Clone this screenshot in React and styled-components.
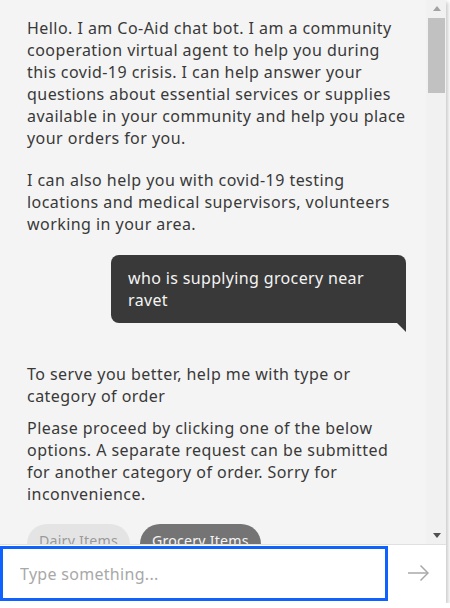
import React from "react";
import styled, { createGlobalStyle } from "styled-components";

const Global = createGlobalStyle`
  html, body { margin: 0; padding: 0; background: #ffffff; }
  body { font-family: "Noto Sans", "Open Sans", sans-serif; }
  * { box-sizing: border-box; }
`;

const Widget = styled.div`
  width: 446px;
  height: 603px;
  display: flex;
  flex-direction: column;
  background: #f4f4f4;
  box-shadow: 2px 2px 4px rgba(0, 0, 0, 0.22);
`;

const ChatArea = styled.div`
  height: 544px;
  display: flex;
  flex-direction: row;
`;

const Messages = styled.div`
  flex: 1;
  overflow: hidden;
  padding: 17px 20px 0 27px;
  display: flex;
  flex-direction: column;
`;

const BotText = styled.p`
  margin: 0 0 ${(p) => p.$gap}px 0;
  font-size: 16px;
  line-height: 22px;
  letter-spacing: 0.45px;
  color: #393939;
`;

const Line = styled.span`
  display: block;
  white-space: nowrap;
`;

const Bubble = styled.div`
  position: relative;
  align-self: flex-end;
  width: 295px;
  margin-bottom: 40px;
  padding: 12px 16px 12px 17px;
  background: #393939;
  color: #f4f4f4;
  font-size: 16px;
  line-height: 22px;
  letter-spacing: 0.35px;
  border-radius: 8px 8px 0 8px;
`;

const Tail = styled.span`
  position: absolute;
  right: 0;
  bottom: -9px;
  width: 0;
  height: 0;
  border-top: 9px solid #393939;
  border-left: 9px solid transparent;
`;

const Chips = styled.div`
  display: flex;
  gap: 10px;
`;

const Chip = styled.button`
  flex: none;
  height: 40px;
  padding: 6px 12px 12px 12px;
  border: none;
  border-radius: 20px;
  font-family: inherit;
  font-size: 14.2px;
  line-height: 22px;
  letter-spacing: 0.2px;
  background: ${(p) => (p.$active ? "#747474" : "#e4e4e4")};
  color: ${(p) => (p.$active ? "#f4f4f4" : "#9a9a9a")};
  display: flex;
  align-items: flex-start;
`;

const Scrollbar = styled.div`
  width: 20px;
  background: #f1f1f1;
  display: flex;
  flex-direction: column;
  align-items: stretch;
`;

const ArrowBtn = styled.div`
  height: 17px;
  display: flex;
  align-items: center;
  justify-content: center;
  padding-left: 1px;
`;

const Triangle = styled.span`
  width: 0;
  height: 0;
  border-left: 4.5px solid transparent;
  border-right: 4.5px solid transparent;
  ${(p) =>
    p.$down
      ? `border-top: 5px solid #505050;`
      : `border-bottom: 5px solid #a3a3a3;`}
`;

const Track = styled.div`
  flex: 1;
  padding: 1px 1px 0 2px;
`;

const Thumb = styled.div`
  height: 75px;
  background: #c1c1c1;
`;

const Composer = styled.div`
  height: 59px;
  background: #ffffff;
  border-top: 1px solid #e0e0e0;
  padding: 1px 0 2px 0;
  display: flex;
  flex-direction: row;
`;

const Input = styled.input`
  width: 388px;
  height: 55px;
  border: 3px solid #0f62fe;
  outline: none;
  padding: 0 0 0 17px;
  font-family: inherit;
  font-size: 16px;
  letter-spacing: 0.3px;
  color: #161616;
  background: #ffffff;
  caret-color: #161616;
  &::placeholder {
    color: #a8a8a8;
  }
`;

const Send = styled.button`
  flex: 1;
  border: none;
  background: transparent;
  display: flex;
  align-items: center;
  justify-content: center;
  padding: 0 0 2px 2px;
`;

const intro = [
  "Hello. I am Co-Aid chat bot. I am a community",
  "cooperation virtual agent to help you during",
  "this covid-19 crisis. I can help answer your",
  "questions about essential services or supplies",
  "available in your community and help you place",
  "your orders for you.",
];

const also = [
  "I can also help you with covid-19 testing",
  "locations and medical supervisors, volunteers",
  "working in your area.",
];

const serve = ["To serve you better, help me with type or", "category of order"];

const proceed = [
  "Please proceed by clicking one of the below",
  "options. A separate request can be submitted",
  "for another category of order. Sorry for",
  "inconvenience.",
];

const Para = ({ lines, gap }) => (
  <BotText $gap={gap}>
    {lines.map((l) => (
      <Line key={l}>{l}</Line>
    ))}
  </BotText>
);

export default function App() {
  return (
    <>
      <Global />
      <Widget>
        <ChatArea>
          <Messages>
            <Para lines={intro} gap={20} />
            <Para lines={also} gap={20} />
            <Bubble>
              <Line>who is supplying grocery near</Line>
              <Line>ravet</Line>
              <Tail />
            </Bubble>
            <Para lines={serve} gap={10} />
            <Para lines={proceed} gap={19} />
            <Chips>
              <Chip>Dairy Items</Chip>
              <Chip $active>Grocery Items</Chip>
            </Chips>
          </Messages>
          <Scrollbar>
            <ArrowBtn>
              <Triangle />
            </ArrowBtn>
            <Track>
              <Thumb />
            </Track>
            <ArrowBtn>
              <Triangle $down />
            </ArrowBtn>
          </Scrollbar>
        </ChatArea>
        <Composer>
          <Input placeholder="Type something..." autoFocus />
          <Send aria-label="Send">
            <svg width="22" height="18" viewBox="0 0 22 18" fill="none">
              <path d="M1 9H21" stroke="#a8a8a8" strokeWidth="1.5" />
              <path d="M13.5 1.5L21 9L13.5 16.5" stroke="#a8a8a8" strokeWidth="1.5" />
            </svg>
          </Send>
        </Composer>
      </Widget>
    </>
  );
}
